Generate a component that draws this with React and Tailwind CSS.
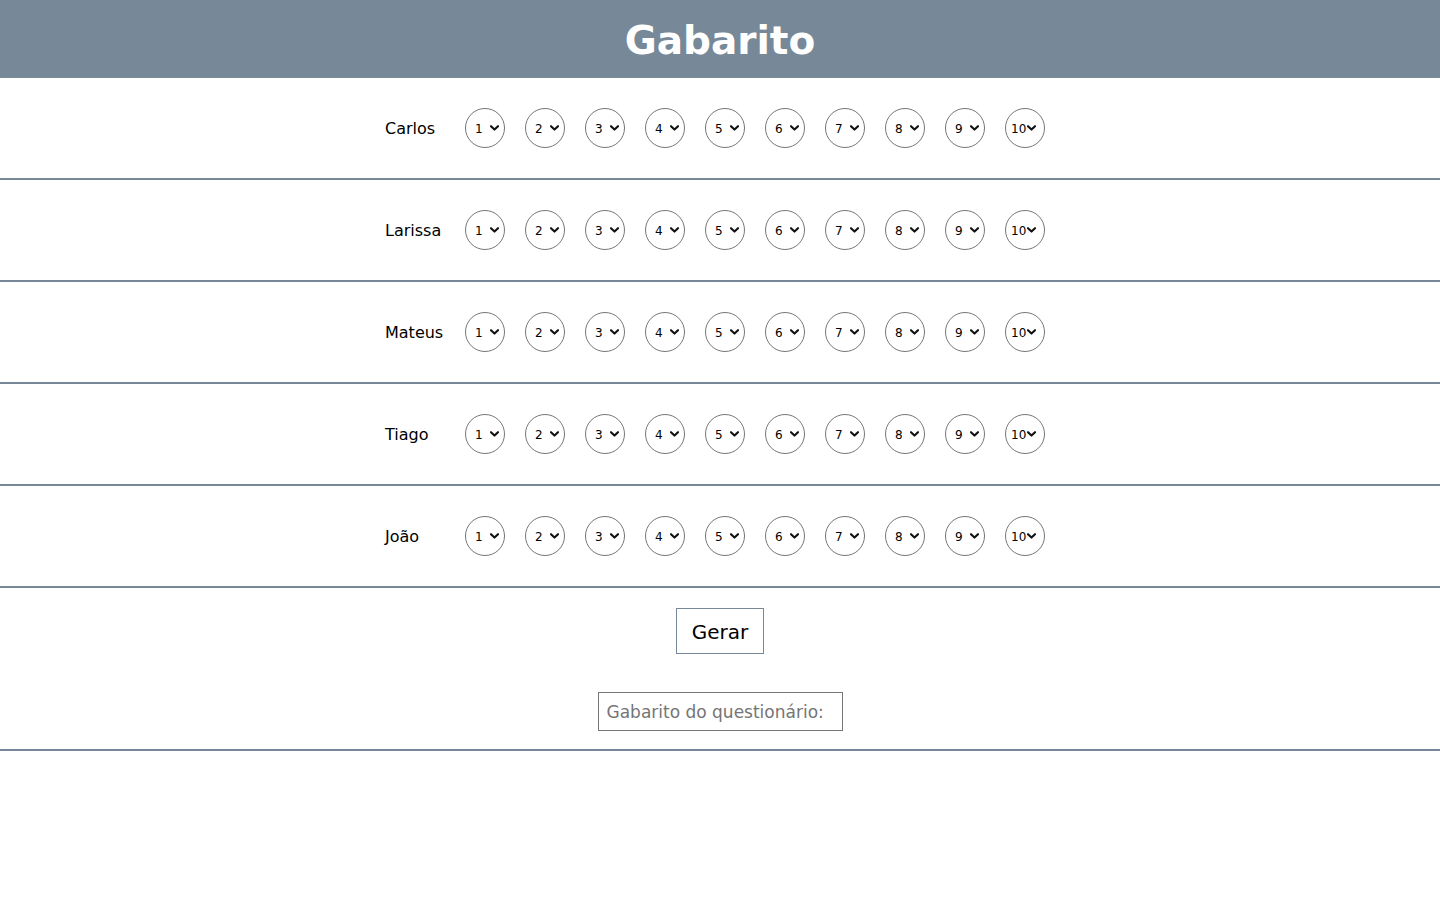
import React from "react";

const names = ["Carlos", "Larissa", "Mateus", "Tiago", "João"];
const nums = [1, 2, 3, 4, 5, 6, 7, 8, 9, 10];

function Chevron({ ten }) {
  return (
    <svg
      width="9"
      height="6"
      viewBox="0 0 9 6"
      className={ten ? "absolute right-[9px] top-[17px] pointer-events-none" : "absolute right-[6px] top-[17px] pointer-events-none"}
    >
      <path d="M1 1.2 L4.5 4.6 L8 1.2" fill="none" stroke="#111" strokeWidth="2.1" strokeLinecap="round" strokeLinejoin="round" />
    </svg>
  );
}

export default function App() {
  return (
    <div className="min-h-[900px] bg-white text-black" style={{ fontFamily: '"DejaVu Sans", Verdana, sans-serif' }}>
      <header className="h-[78px] bg-[#778899] flex items-center justify-center pt-[3px]">
        <h1 className="text-[39px] font-bold text-white leading-none">Gabarito</h1>
      </header>
      {names.map((n) => (
        <div key={n} className="h-[102px] border-b-2 border-[#778899] flex items-center justify-center">
          <span className="w-[70px] text-[16px] mt-[2px]">{n}</span>
          {nums.map((k) => (
            <div key={k} className="relative mx-[10px] w-10 h-10">
              <select
                defaultValue={k}
                className={
                  k === 10
                    ? "appearance-none w-10 h-10 rounded-full border border-[#767676] bg-white text-[12px] pl-[5px] pr-0 pt-[2px] text-black"
                    : "appearance-none w-10 h-10 rounded-full border border-[#767676] bg-white text-[12px] pl-[9px] pr-0 pt-[2px] text-black"
                }
              >
                {nums.map((v) => (
                  <option key={v} value={v}>{v}</option>
                ))}
              </select>
              <Chevron ten={k === 10} />
            </div>
          ))}
        </div>
      ))}
      <div className="h-[163px] border-b-2 border-[#778899] flex flex-col items-center pt-[20px]">
        <button className="w-[88px] h-[46px] border border-[#778899] bg-white text-[20px] text-black pt-[2px]">Gerar</button>
        <input
          placeholder="Gabarito do questionário:"
          className="mt-[38px] w-[245px] h-[39px] border border-[#767676] px-[8px] text-[17px] placeholder:text-[#757575]"
        />
      </div>
    </div>
  );
}
